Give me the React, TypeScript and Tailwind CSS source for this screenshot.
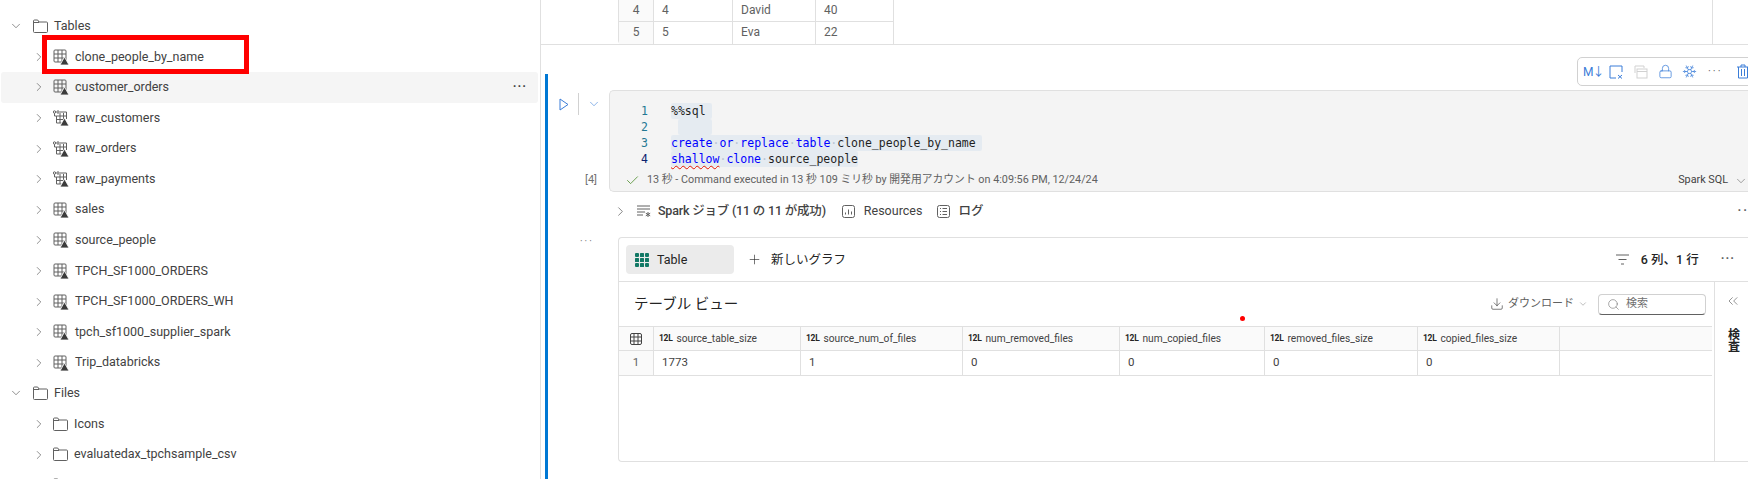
import { Check, ChevronDown, ChevronRight, ChevronsLeft, Download, Lock, Plus, Search, Snowflake } from "lucide-react";

const sans = "font-['Roboto','Noto_Sans_CJK_JP',sans-serif]";

const FolderIcon = () => (
  <svg width="15" height="15" viewBox="0 0 15 15" fill="none" stroke="#616161" className="shrink-0">
    <path d="M.5 12.500V2a1 1 0 0 1 1-1h3.200l1.300 2h7.500a1 1 0 0 1 1 1v8.500a1 1 0 0 1-1 1h-12a1 1 0 0 1-1-1z" />
    <path d="M.5 3.500H6" />
  </svg>
);

const TableIcon = ({ linked }: { linked?: boolean }) => (
  <svg width="16" height="16" viewBox="0 0 16 16" fill="none" stroke="#616161" className="shrink-0">
    {linked ? (
      <>
        <circle cx="1.500" cy="2" r="1.200" />
        <circle cx="5" cy="2" r="1.200" />
        <path d="M1.500 3.200V6h2M7 2h6.500v7M3.500 6h10M3.500 9.500h7M7 3v10M10.500 3v6M3.500 6v7h5" />
      </>
    ) : (
      <>
        <rect x="1" y="1" width="12" height="12" rx="1" />
        <path d="M1 5h12M1 9h12M5 1v12M9 1v12" />
      </>
    )}
    <path d="M11.500 8 16 16H7z" fill="#3b3b3b" stroke="#fff" strokeWidth=".8" />
  </svg>
);

const TreeRow = ({ label, kind, hover }: { label: string; kind: "table" | "linked" | "folder"; hover?: boolean }) => (
  <div className={`h-[30.6px] flex items-center pl-[31px] rounded-[3px] ${hover ? "bg-[#f5f5f5]" : ""}`}>
    <ChevronRight size={14} strokeWidth={1} className="text-[#424242] shrink-0" />
    <div className="w-[7px] shrink-0" />
    {kind === "folder" ? <FolderIcon /> : <TableIcon linked={kind === "linked"} />}
    <span className="ml-[6px] text-[#424242]">{label}</span>
    {hover && <span className="ml-auto mr-[11px] text-[#424242] font-bold tracking-[1px] leading-none">···</span>}
  </div>
);

const TreeHeader = ({ label }: { label: string }) => (
  <div className="h-[30.6px] flex items-center pl-[8px]">
    <ChevronDown size={14} strokeWidth={1} className="text-[#424242] shrink-0" />
    <div className="w-[10px] shrink-0" />
    <FolderIcon />
    <span className="ml-[6px] text-[#424242]">{label}</span>
  </div>
);

const PeopleRow = ({ n, name, age, last }: { n: string; name: string; age: string; last?: boolean }) => (
  <div className={`grid grid-cols-[34px_79px_83px_78px] h-[22px] text-[12px] text-[#616161] ${last ? "" : "border-b border-[#e0e0e0]"}`}>
    <div className="bg-[#fafafa] text-center leading-[21px]">{n}</div>
    <div className="border-l border-[#e0e0e0] pl-[8px] leading-[21px]">{n}</div>
    <div className="border-l border-[#e0e0e0] pl-[8px] leading-[21px]">{name}</div>
    <div className="border-l border-[#e0e0e0] pl-[8px] leading-[21px]">{age}</div>
  </div>
);

const Ws = () => <span className="text-[#b8c4d4]">·</span>;
const Kw = ({ children }: { children: string }) => <span className="text-[#0000ff]">{children}</span>;

const CodeLine = ({ n, active, children }: { n: number; active?: boolean; children?: React.ReactNode }) => (
  <div className="flex h-[16px] leading-[16px]">
    <div className={`w-[38px] text-right shrink-0 ${active ? "text-[#0b216f]" : "text-[#237893]"}`}>{n}</div>
    <div className="ml-[23px] whitespace-pre">{children}</div>
  </div>
);

const IntIcon = () => (
  <span className="text-[8.5px] font-bold text-[#242424] tracking-[-0.3px] mr-[4px] leading-none shrink-0">12L</span>
);

const columns = ["source_table_size", "source_num_of_files", "num_removed_files", "num_copied_files", "removed_files_size", "copied_files_size"];
const values = ["1773", "1", "0", "0", "0", "0"];

export default function App() {
  return (
    <div className={`relative w-[1748px] h-[479px] overflow-hidden bg-white flex text-[12.5px] ${sans}`}>
      <div className="relative w-[541px] shrink-0 border-r border-[#e0e0e0] pt-[11px] pl-[1px] pr-[2px]">
        <TreeHeader label="Tables" />
        <TreeRow kind="table" label="clone_people_by_name" />
        <TreeRow kind="table" label="customer_orders" hover />
        <TreeRow kind="linked" label="raw_customers" />
        <TreeRow kind="linked" label="raw_orders" />
        <TreeRow kind="linked" label="raw_payments" />
        <TreeRow kind="table" label="sales" />
        <TreeRow kind="table" label="source_people" />
        <TreeRow kind="table" label="TPCH_SF1000_ORDERS" />
        <TreeRow kind="table" label="TPCH_SF1000_ORDERS_WH" />
        <TreeRow kind="table" label="tpch_sf1000_supplier_spark" />
        <TreeRow kind="table" label="Trip_databricks" />
        <TreeHeader label="Files" />
        <TreeRow kind="folder" label="Icons" />
        <TreeRow kind="folder" label="evaluatedax_tpchsample_csv" />
        <TreeRow kind="folder" label="" />
        <div className="absolute left-[42px] top-[35px] w-[207px] h-[39px] border-[5px] border-[#ff0000]" />
      </div>

      <div className="relative flex-1 min-w-0">
        {/* previous cell output, scrolled off the top */}
        <div className="h-[45px] border-b border-[#e0e0e0] pl-[77px] flex">
          <div className="border-l border-[#e0e0e0] rounded-bl-[4px] w-[275px] shrink-0">
            <PeopleRow n="4" name="David" age="40" />
            <PeopleRow n="5" name="Eva" age="22" last />
          </div>
          <div className="w-[820px] border-l border-r border-[#e0e0e0]" />
        </div>

        {/* cell toolbar */}
        <div className="absolute left-[1036px] top-[57px] w-[200px] h-[29px] border border-[#d1d1d1] rounded-[5px] bg-white flex items-center text-[#3b7dd8]">
          <span className="ml-[5px] w-[15px] text-[12px] leading-none tracking-[-1px] whitespace-nowrap">M↓</span>
          <svg width="14" height="14" viewBox="0 0 14 14" fill="none" stroke="currentColor" className="ml-[11px]">
            <path d="M13 7V1H1v12h6" />
            <path d="m9 10 4 3.500M13 10l-4 3.500" />
          </svg>
          <svg width="14" height="14" viewBox="0 0 14 14" fill="none" stroke="#d1d1d1" className="ml-[11px]">
            <path d="M1 8V1h9v2" />
            <rect x="3" y="4" width="10" height="9" />
            <path d="M3 6.500h10" />
          </svg>
          <Lock size={15} strokeWidth={1.2} className="ml-[10px]" />
          <Snowflake size={15} strokeWidth={1.2} className="ml-[9px]" />
          <span className="ml-[11px] text-[11px] text-[#616161] tracking-[2px] leading-none">···</span>
          <svg width="14" height="15" viewBox="0 0 14 15" fill="none" stroke="currentColor" className="ml-[13px]">
            <path d="M1 3h12M5 3V1h4v2M2.500 3v11h9V3M5.500 5v7M8.500 5v7" />
          </svg>
        </div>

        <div className="absolute left-[699px] top-[316px] w-[5px] h-[5px] rounded-full bg-[#ff0000]" />

        <div className="ml-[4px] mt-[29px] h-[405px] border-l-[3px] border-[#0078d4] pt-[16px]">
          {/* code cell */}
          <div className="flex">
            <div className="w-[61px] shrink-0 flex flex-col">
              <div className="flex items-center h-[24px] mt-[2px] pl-[11px]">
                <svg width="10" height="13" viewBox="0 0 10 13" fill="none" stroke="#3b7dd8">
                  <path d="M1 1v11l8-5.500z" />
                </svg>
                <div className="w-px h-[22px] bg-[#d1d1d1] ml-[9px]" />
                <ChevronDown size={14} strokeWidth={1} className="text-[#3b7dd8] ml-[8px]" />
              </div>
              <div className="mt-auto mb-[3px] pl-[37px] text-[11px] text-[#707070] h-[18px] leading-[18px]">[4]</div>
            </div>
            <div className="flex-1 h-[102px] bg-[#f4f4f4] border border-r-0 border-[#e0e0e0] rounded-l-[5px] flex flex-col">
              <div className="pt-[12px] font-['DejaVu_Sans_Mono','Liberation_Mono',monospace] text-[11.5px] text-[#1f1f1f]">
                <CodeLine n={1}>
                  <span className="inline-block h-[16px] bg-[#e5ebf1] pr-[6px] rounded-[2px]">%%sql</span>
                </CodeLine>
                <CodeLine n={2}>
                  <span className="inline-block h-[16px] w-[34px] ml-[7px] bg-[#e5ebf1] rounded-[2px]" />
                </CodeLine>
                <CodeLine n={3}>
                  <span className="inline-block h-[16px] bg-[#e5ebf1] pr-[6px] rounded-[2px]">
                    <Kw>create</Kw><Ws /><Kw>or</Kw><Ws /><Kw>replace</Kw><Ws /><Kw>table</Kw><Ws />clone_people_by_name
                  </span>
                </CodeLine>
                <CodeLine n={4} active>
                  <span className="inline-block h-[16px] bg-[#e5ebf1] rounded-[2px]">
                    <span className="text-[#0000ff] underline decoration-wavy decoration-[#e51400] decoration-1 underline-offset-2">shallow</span><Ws /><Kw>clone</Kw><Ws />source_people
                  </span>
                </CodeLine>
              </div>
              <div className="mt-auto h-[22px] pt-[1px] flex items-center text-[10.8px] text-[#616161] pl-[15px]">
                <Check size={15} strokeWidth={1.3} className="text-[#4c8c2b] shrink-0" />
                <span className="ml-[7px] whitespace-nowrap">13 秒 - Command executed in 13 秒 109 ミリ秒 by 開発用アカウント on 4:09:56 PM, 12/24/24</span>
                <span className="ml-auto text-[#424242]">Spark SQL</span>
                <ChevronDown size={14} strokeWidth={1} className="text-[#616161] ml-[6px] shrink-0" />
              </div>
            </div>
          </div>

          {/* job summary */}
          <div className="h-[37px] pt-[1px] flex items-center pl-[65px] text-[#424242] whitespace-nowrap">
            <ChevronRight size={15} strokeWidth={1} className="shrink-0" />
            <svg width="14" height="14" viewBox="0 0 14 14" fill="none" stroke="#616161" className="ml-[9px] shrink-0">
              <path d="M0 2h13M0 5h13M0 8h8M0 11h6" />
              <path d="m11 8 0 5M8.800 9.200l4.400 2.600M13.200 9.200l-4.400 2.600" />
            </svg>
            <span className="ml-[7px] font-medium tracking-[-0.2px]">Spark ジョブ (11 の 11 が成功)</span>
            <svg width="13" height="13" viewBox="0 0 13 13" fill="none" stroke="#616161" className="ml-[16px] shrink-0">
              <rect x=".5" y=".5" width="12" height="12" rx="2" />
              <path d="M3.500 9.500v-2M6.500 9.500v-5M9.500 9.500v-3" />
            </svg>
            <span className="ml-[9px]">Resources</span>
            <svg width="13" height="13" viewBox="0 0 13 13" fill="none" stroke="#616161" className="ml-[15px] shrink-0">
              <rect x=".5" y=".5" width="12" height="12" rx="2" />
              <path d="M3 3.500h1M3 6.500h1M3 9.500h1M5.500 3.500H10M5.500 6.500H10M5.500 9.500H10" />
            </svg>
            <span className="ml-[8px] font-medium">ログ</span>
            <span className="ml-auto mr-[-1px] text-[#616161] font-bold tracking-[2px] leading-none">··</span>
          </div>

          {/* output */}
          <div className="flex mt-[8px]">
            <div className="w-[70px] shrink-0 pl-[32px] text-[10px] tracking-[2px] text-[#757575] leading-none">···</div>
            <div className="flex-1 h-[225px] border-y border-l border-[#e0e0e0] rounded-l-[4px] flex flex-col">
              <div className="h-[44px] shrink-0 border-b border-[#e0e0e0] flex items-center pl-[7px]">
                <div className="w-[108px] h-[29px] rounded-[4px] bg-[#ebebeb] flex items-center pl-[9px] text-[#242424]">
                  <svg width="14" height="14" viewBox="0 0 14 14" fill="#117865">
                    <rect x="0" y="0" width="4" height="4" rx="1" />
                    <rect x="5" y="0" width="4" height="4" rx=".5" />
                    <rect x="10" y="0" width="4" height="4" rx="1" />
                    <rect x="0" y="5" width="4" height="4" rx=".5" />
                    <rect x="5" y="5" width="4" height="4" rx=".5" />
                    <rect x="10" y="5" width="4" height="4" rx=".5" />
                    <rect x="0" y="10" width="4" height="4" rx="1" />
                    <rect x="5" y="10" width="4" height="4" rx=".5" />
                    <rect x="10" y="10" width="4" height="4" rx="1" />
                  </svg>
                  <span className="ml-[8px] pt-[1px]">Table</span>
                </div>
                <Plus size={15} strokeWidth={1} className="ml-[13px] text-[#242424]" />
                <span className="ml-[9px] pt-[1px] text-[#242424]">新しいグラフ</span>
                <svg width="13" height="11" viewBox="0 0 13 11" fill="none" stroke="#616161" className="ml-auto">
                  <path d="M0 1h13M2.500 5.500h8M5 10h3" />
                </svg>
                <span className="ml-[12px] pt-[1px] text-[#242424] font-medium">6 列、1 行</span>
                <span className="ml-[22px] mr-[13px] text-[#616161] font-bold tracking-[1px] leading-none">···</span>
              </div>

              <div className="flex-1 flex min-h-0">
                <div className="w-[1093px] shrink-0">
                  <div className="h-[44px] flex items-center pl-[15px]">
                    <span className="text-[14.5px] pt-[1px] text-[#242424]">テーブル ビュー</span>
                    <Download size={14} strokeWidth={1} className="ml-auto text-[#242424]" />
                    <span className="ml-[4px] text-[11px] text-[#616161]">ダウンロード</span>
                    <ChevronDown size={10} strokeWidth={1} className="ml-[4px] text-[#616161]" />
                    <div className="ml-[10px] mr-[6px] w-[108px] h-[21px] border border-[#d1d1d1] border-b-[#616161] rounded-[4px] flex items-center pl-[8px]">
                      <Search size={13} strokeWidth={1} className="text-[#616161]" />
                      <span className="ml-[6px] text-[11px] text-[#707070]">検索</span>
                    </div>
                  </div>
                  <div className="grid grid-cols-[34px_147px_162px_157px_145px_153px_142px_153px] text-[10.2px] text-[#424242]">
                    <div className="h-[25px] bg-[#fafafa] border-y border-[#e0e0e0] flex items-center justify-center">
                      <svg width="12" height="12" viewBox="0 0 12 12" fill="none" stroke="#424242">
                        <rect x=".5" y=".5" width="11" height="11" rx="1.500" />
                        <path d="M0 4h12M0 8h12M4 0v12M8 0v12" />
                      </svg>
                    </div>
                    {columns.map((c) => (
                      <div key={c} className="h-[25px] bg-[#fafafa] border-y border-l border-[#e0e0e0] flex items-center pl-[5px] whitespace-nowrap">
                        <IntIcon />
                        {c}
                      </div>
                    ))}
                    <div className="h-[25px] bg-[#fafafa] border-y border-l border-[#e0e0e0]" />
                    <div className="h-[25px] bg-[#fafafa] border-b border-[#e0e0e0] flex items-center justify-center text-[11.5px] text-[#616161]">1</div>
                    {values.map((v, i) => (
                      <div key={i} className="h-[25px] border-b border-l border-[#e0e0e0] flex items-center pl-[8px] text-[11.5px]">{v}</div>
                    ))}
                    <div className="h-[25px] border-b border-l border-[#e0e0e0]" />
                  </div>
                </div>
                <div className="ml-[2px] flex-1 border-l border-[#e0e0e0] flex flex-col items-center pl-[2px]">
                  <ChevronsLeft size={16} strokeWidth={1} className="mt-[11px] text-[#616161]" />
                  <span className="mt-[19px] text-[12px] leading-[12px] font-bold text-[#242424] [writing-mode:vertical-rl]">検査</span>
                </div>
              </div>
            </div>
          </div>
        </div>
      </div>
    </div>
  );
}
